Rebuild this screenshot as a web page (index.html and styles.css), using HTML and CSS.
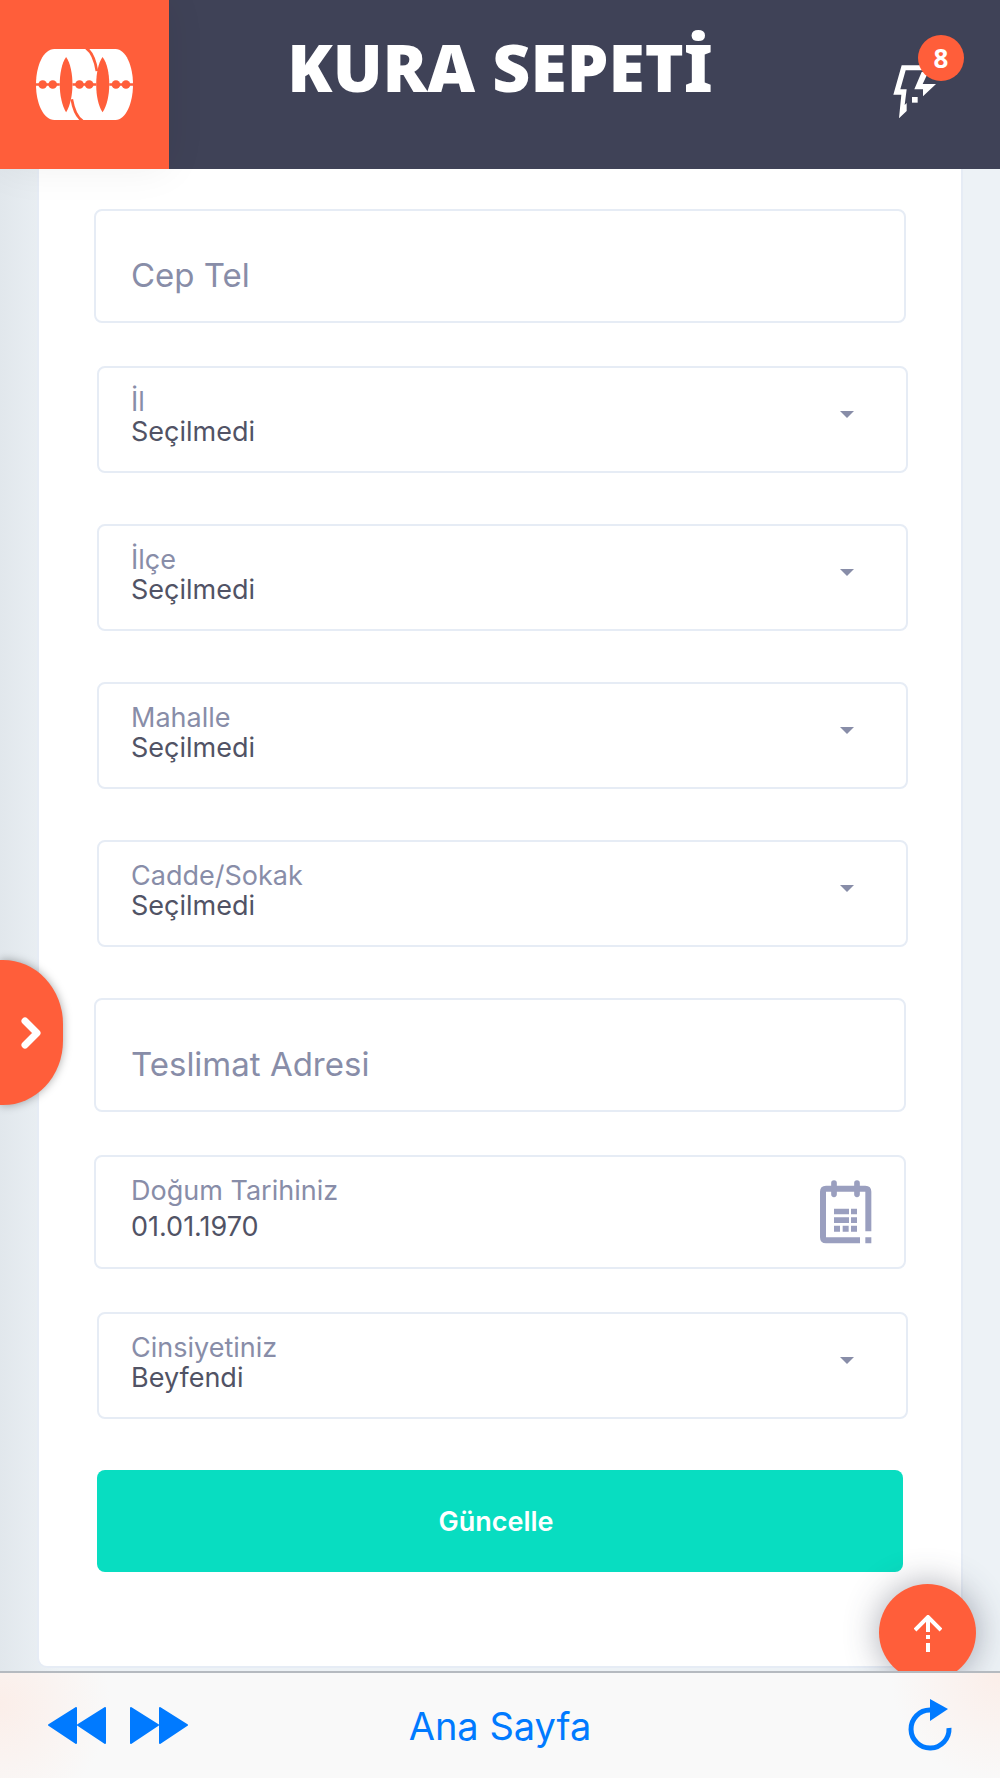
FILE: index.html
```html
<!DOCTYPE html>
<html lang="tr">
    <head>
        <meta charset="utf-8">
        <meta name="viewport" content="width=device-width, initial-scale=1">
        <title>Kura Sepeti</title>
        <link rel="stylesheet" href="styles.css">
    </head>

    <body>
        <header class="topbar">
            <a class="logo" href="#" aria-label="Kura Sepeti">
                <svg width="97" height="71" viewBox="0 0 290 212">
                    <path class="ring" d="M55 0H238C268 0 290 50 290 106S268 212 238 212H55C22 212 0 162 0 106S22 0 55 0Z"/>
                    <path class="cut" d="M90 24C103 42 109 75 109 106C109 138 102 170 90 189C78 170 71 138 71 106C71 75 77 42 90 24Z"/>
                    <path class="cut" d="M199 24C213 42 219 75 219 106C219 138 212 170 199 189C186 170 180 138 180 106C180 75 186 42 199 24Z"/>
                    <path class="gap" d="M150 -3C166 8 177 34 182 66M107 150C112 180 123 204 139 215"/>
                    <path class="gap" d="M0 106H71M109 106H180M219 106H290"/>
                    <g class="cut">
                        <circle cx="20" cy="106" r="13"/><circle cx="50" cy="106" r="13"/>
                        <circle cx="130" cy="106" r="13"/><circle cx="159" cy="106" r="13"/>
                        <circle cx="239" cy="106" r="13"/><circle cx="269" cy="106" r="13"/>
                    </g>
                </svg>
            </a>
            <h1>KURA SEPETİ</h1>
            <div class="alerts">
                <a class="bolt" href="#" aria-label="Bildirimler">
                    <svg width="43" height="54" viewBox="100 165 129 162">
                        <path d="M126 166H200V181H138L122 238H141L135 285L141 279V303L118 325L125 254H101Z"/>
                        <path d="M186 186L164 238H190V259L229 222H189L206 186Z"/>
                        <path d="M157 261H174V278H157Z"/>
                    </svg>
                    <span class="badge">8</span>
                </a>
            </div>
        </header>

        <main>
            <form class="card">
                <div class="field text">
                    <input id="tel" type="tel" placeholder="Cep Tel" aria-label="Cep Tel">
                </div>
                <div class="field pick">
                    <label for="il">İl</label>
                    <select id="il"><option>Seçilmedi</option></select>
                </div>
                <div class="field pick">
                    <label for="ilce">İlçe</label>
                    <select id="ilce"><option>Seçilmedi</option></select>
                </div>
                <div class="field pick">
                    <label for="mahalle">Mahalle</label>
                    <select id="mahalle"><option>Seçilmedi</option></select>
                </div>
                <div class="field pick">
                    <label for="cadde">Cadde/Sokak</label>
                    <select id="cadde"><option>Seçilmedi</option></select>
                </div>
                <div class="field text">
                    <input id="adres" type="text" placeholder="Teslimat Adresi" aria-label="Teslimat Adresi">
                </div>
                <div class="field date">
                    <div class="stack">
                        <label for="dogum">Doğum Tarihiniz</label>
                        <input id="dogum" type="text" value="01.01.1970">
                    </div>
                    <svg class="calendar" width="52" height="64" viewBox="0 0 156 192">
                        <path class="frame" d="M145 154V35Q145 26 136 26H18Q9 26 9 35V172Q9 181 18 181H120"/>
                        <path class="pins" d="M42 9V43M111 9V43"/>
                        <path d="M42 86H87V103H42ZM93 86H111V103H93ZM42 112H87V129H42ZM93 112H111V129H93ZM42 137H60V155H42ZM68 137H86V155H68ZM93 137H111V155H93ZM136 172H154V190H136Z"/>
                    </svg>
                </div>
                <div class="field pick">
                    <label for="cinsiyet">Cinsiyetiniz</label>
                    <select id="cinsiyet"><option>Beyfendi</option></select>
                </div>
                <button class="submit" type="submit">Güncelle</button>
            </form>
        </main>

        <button class="side-toggle" type="button" aria-label="Menü">
            <svg width="20" height="32" viewBox="0 0 20 32"><path d="M4 4L16 16L4 28"/></svg>
        </button>
        <button class="to-top" type="button" aria-label="Yukarı">
            <svg width="28" height="37" viewBox="0 0 28 37"><path d="M1 15L14 2L27 15M14 2V17M14 20V24M14 28V37"/></svg>
        </button>

        <footer class="toolbar">
            <div class="history">
                <button type="button" aria-label="Geri">
                    <svg width="58" height="37" viewBox="0 0 58 37"><path d="M1 18L28 1V36ZM30 18L57 1V36Z"/></svg>
                </button>
                <button type="button" aria-label="İleri">
                    <svg width="58" height="37" viewBox="0 0 58 37"><path d="M1 1L28 18L1 36ZM30 1L57 18L30 36Z"/></svg>
                </button>
            </div>
            <a href="#">Ana Sayfa</a>
            <button class="reload" type="button" aria-label="Yenile">
                <svg width="44" height="53" viewBox="0 0 44 53">
                    <path class="arc" d="M22 11A19 19 0 1 0 41 29"/>
                    <path d="M22 0L40 10L22 22Z"/>
                </svg>
            </button>
        </footer>
    </body>
</html>
```
FILE: styles.css
```css
*{box-sizing: border-box;}
body{margin: 0;background: linear-gradient(90deg, #e1e7ec 0, #edf2f6 60px);font-family: Inter, "Noto Sans", sans-serif;font-size: 27px;color: #515365;}
button{border: 0;padding: 0;background: none;font-family: inherit;cursor: pointer;}
a{text-decoration: none;}
svg{display: block;}

/* header */
.topbar{position: sticky;top: 0;z-index: 3;display: flex;height: 169px;background: #3f4257;}
.logo{width: 169px;display: flex;align-items: center;justify-content: center;background: #ff5e3a;box-shadow: 0 0 40px rgba(0,0,0,.06);}
.logo .ring{fill: #fff;}
.logo .cut{fill: #ff5e3a;}
.logo .gap{fill: none;stroke: #ff5e3a;stroke-width: 8;}
.topbar h1{flex: 1;margin: 0;padding-top: 22px;text-align: center;font: 900 66px/88px "Noto Sans", sans-serif;color: #fff;white-space: nowrap;}
.alerts{width: 169px;padding: 65px 0 0 62px;}
.bolt{position: relative;display: block;width: 43px;}
.bolt svg{fill: #fff;}
.badge{position: absolute;left: 25px;top: -30px;width: 46px;height: 46px;border-radius: 50%;background: #ff5e3a;color: #fff;font: 700 26px/46px "Open Sans", sans-serif;text-align: center;}

/* form */
main{padding: 0 37px 3px;}
.card{padding: 40px 55px 94px;background: #fff;border: 2px solid #e6ecf5;border-top: 0;border-radius: 0 0 10px 10px;}
.field{border: 2px solid #e6ecf5;border-radius: 8px;}
.field input,.field select{display: block;width: 100%;border: 0;padding: 0;background: none;font: inherit;color: #515365;outline: 0;}
.field label{display: block;line-height: 30px;color: #888da8;}
.text{margin-bottom: 43px;}
.text input{height: 110px;padding: 18px 35px 0;font-size: 33px;}
.text input::placeholder{color: #888da8;opacity: 1;}
.pick{position: relative;margin: 0 -2px 51px 3px;padding: 19px 32px 24px;}
.pick select{height: 30px;line-height: 30px;appearance: none;}
.pick::after{content: "";position: absolute;right: 52px;top: 43px;border: 7px solid transparent;border-top-color: #888da8;border-bottom: 0;pointer-events: none;}
.date{display: flex;justify-content: space-between;margin-bottom: 43px;padding: 19px 32px 21px 35px;}
.stack{flex: 1;}
.date input{height: 40px;}
.calendar{margin-top: 4px;fill: #9a9fbf;}
.calendar .frame{fill: none;stroke: #9a9fbf;stroke-width: 18;}
.calendar .pins{stroke: #9a9fbf;stroke-width: 17;stroke-linecap: round;}
.submit{display: block;width: calc(100% - 6px);height: 102px;margin: 0 3px;padding-right: 8px;border-radius: 8px;background: #08ddc1;color: #fff;font-size: 27px;font-weight: 600;}

/* floating buttons */
.side-toggle{position: fixed;left: 0;top: 54%;z-index: 2;width: 63px;height: 145px;padding-left: 21px;background: #ff5e3a;border-radius: 0 60px 60px 0 / 0 64px 64px 0;box-shadow: 0 0 10px rgba(0,0,0,.35);}
.side-toggle path{fill: none;stroke: #fff;stroke-width: 7;stroke-linecap: round;stroke-linejoin: round;}
.to-top{position: fixed;right: 24px;bottom: 97px;z-index: 2;display: flex;justify-content: center;width: 97px;height: 97px;padding-top: 31px;border-radius: 50%;background: #ff5e3a;box-shadow: 0 0 34px rgba(63,66,87,.45);}
.to-top path{fill: none;stroke: #fff;stroke-width: 4;}

/* bottom bar */
.toolbar{position: sticky;bottom: 0;z-index: 3;display: grid;grid-template-columns: 1fr auto 1fr;align-items: center;height: 107px;padding: 0 48px;border-top: 2px solid #b5bac0;background: radial-gradient(circle at 0 30%, #fbeee9, transparent 110px), radial-gradient(circle at 100% 0, #fbeee9, transparent 110px), #f9f9f9;}
.history{display: flex;gap: 24px;}
.toolbar a{font-size: 38px;color: #007aff;}
.toolbar svg{fill: #007aff;}
.history path{stroke: #007aff;stroke-width: 2;stroke-linejoin: round;}
.reload{justify-self: end;}
.reload .arc{fill: none;stroke: #007aff;stroke-width: 5;}
```
